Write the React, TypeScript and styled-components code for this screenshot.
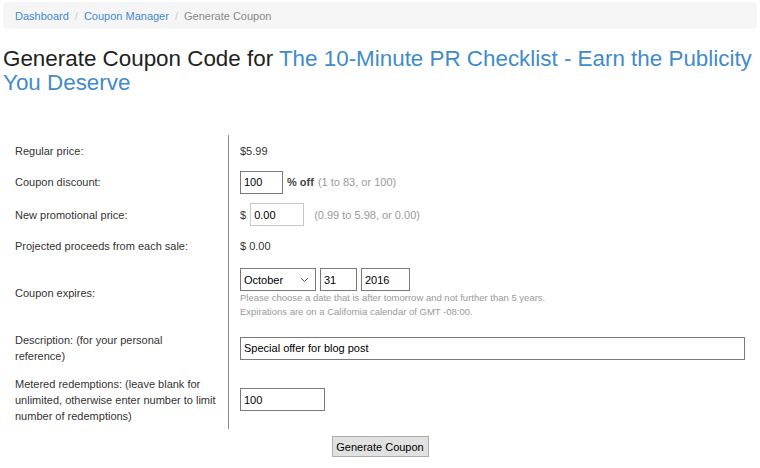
import { createGlobalStyle, styled } from 'styled-components';

const GlobalStyle = createGlobalStyle`
    body {
        margin: 0;
        background: #fff;
        font-family: "Liberation Sans", Arial, sans-serif;
        color: #333;
    }
`;

export default function App() {
    return (
        <Page>
            <GlobalStyle />
            <Breadcrumb>
                <Crumb href="#">Dashboard</Crumb>
                <Separator>/</Separator>
                <Crumb href="#">Coupon Manager</Crumb>
                <Separator>/</Separator>
                <ActiveCrumb>Generate Coupon</ActiveCrumb>
            </Breadcrumb>

            <Title>
                Generate Coupon Code for <TitleLink href="#">The 10-Minute PR Checklist - Earn the Publicity You Deserve</TitleLink>
            </Title>

            <FormTable>
                <Row $h={32}>
                    <Label>Regular price:</Label>
                    <Value>$5.99</Value>
                </Row>
                <Row $h={30}>
                    <Label>Coupon discount:</Label>
                    <Value>
                        <TextInput $w={43} defaultValue="100" />
                        <Unit>% off</Unit>
                        <Hint $gap={0}>(1 to 83, or 100)</Hint>
                    </Value>
                </Row>
                <Row $h={35}>
                    <Label>New promotional price:</Label>
                    <Value>
                        <span>$</span>
                        <TextInput $w={54} $light defaultValue="0.00" />
                        <Hint $gap={6}>(0.99 to 5.98, or 0.00)</Hint>
                    </Value>
                </Row>
                <Row $h={28}>
                    <Label>Projected proceeds from each sale:</Label>
                    <Value>$ 0.00</Value>
                </Row>
                <Row $h={66}>
                    <Label>Coupon expires:</Label>
                    <StackValue>
                        <DateRow>
                            <Select defaultValue="October">
                                <option>October</option>
                            </Select>
                            <TextInput $w={37} defaultValue="31" />
                            <TextInput $w={49} defaultValue="2016" />
                        </DateRow>
                        <Help>Please choose a date that is after tomorrow and not further than 5 years.</Help>
                        <Help>Expirations are on a California calendar of GMT -08:00.</Help>
                    </StackValue>
                </Row>
                <Row $h={44}>
                    <Label>
                        <span>
                            Description: (for your personal
                            <br />
                            reference)
                        </span>
                    </Label>
                    <Value>
                        <TextInput $w={505} defaultValue="Special offer for blog post" />
                    </Value>
                </Row>
                <Row $h={59}>
                    <Label>Metered redemptions: (leave blank for unlimited, otherwise enter number to limit number of redemptions)</Label>
                    <Value>
                        <TextInput $w={85} defaultValue="100" />
                    </Value>
                </Row>
            </FormTable>

            <Actions>
                <Button>Generate Coupon</Button>
            </Actions>
        </Page>
    );
}

const Page = styled.div`
    padding: 2px 3px;
    font-size: 11px;
`;

const Breadcrumb = styled.div`
    display: flex;
    align-items: center;
    height: 27px;
    padding: 0 12px;
    border-radius: 4px;
    background: #f5f5f5;
    font-size: 11px;
`;

const Crumb = styled.a`
    color: #428bca;
    text-decoration: none;
`;

const Separator = styled.span`
    padding: 0 6px;
    color: #ccc;
`;

const ActiveCrumb = styled.span`
    color: #888;
`;

const Title = styled.h1`
    margin: 18px 0 0;
    font-size: 22.4px;
    font-weight: 400;
    line-height: 24px;
    color: #222;
`;

const TitleLink = styled.a`
    color: #428bca;
    text-decoration: none;
`;

const FormTable = styled.div`
    margin-top: 40px;
    display: flex;
    flex-direction: column;
`;

const Row = styled.div<{ $h: number }>`
    display: grid;
    grid-template-columns: 225px 1fr;
    min-height: ${(p) => p.$h}px;
`;

const Label = styled.div`
    display: flex;
    align-items: center;
    padding: 0 7px 0 12px;
    line-height: 16px;
    color: #333;
`;

const Value = styled.div`
    display: flex;
    align-items: center;
    gap: 4px;
    padding-left: 11px;
    border-left: 1px solid #888;
    color: #333;
`;

const StackValue = styled.div`
    display: flex;
    flex-direction: column;
    justify-content: center;
    padding-left: 11px;
    border-left: 1px solid #888;
`;

const DateRow = styled.div`
    display: flex;
    gap: 4px;
    padding-top: 1px;
`;

const TextInput = styled.input<{ $w: number; $light?: boolean }>`
    box-sizing: border-box;
    width: ${(p) => p.$w}px;
    height: 23px;
    margin: 0;
    padding: 0 3px;
    border: 1px solid ${(p) => (p.$light ? '#c8c8c8' : '#7a7a7a')};
    border-radius: 0;
    font-family: "Liberation Sans", Arial, sans-serif;
    font-size: 11px;
    color: #000;
    background: #fff;
`;

const Select = styled.select`
    box-sizing: border-box;
    width: 76px;
    height: 23px;
    margin: 0;
    padding: 0 3px;
    border: 1px solid #7a7a7a;
    border-radius: 0;
    appearance: none;
    background: #fff url("data:image/svg+xml;utf8,<svg xmlns='http://www.w3.org/2000/svg' width='9' height='6' viewBox='0 0 9 6'><path d='M1 1l3.5 3.5L8 1' fill='none' stroke='%23555' stroke-width='1'/></svg>") no-repeat right 6px center;
    font-family: "Liberation Sans", Arial, sans-serif;
    font-size: 11px;
    color: #000;
`;

const Unit = styled.span`
    font-weight: 700;
    color: #444;
`;

const Hint = styled.span<{ $gap: number }>`
    margin-left: ${(p) => p.$gap}px;
    color: #999;
`;

const Help = styled.div`
    font-size: 9.5px;
    line-height: 14px;
    color: #999;
`;

const Actions = styled.div`
    display: flex;
    justify-content: center;
    margin-top: 7px;
`;

const Button = styled.button`
    box-sizing: border-box;
    width: 97px;
    height: 21px;
    padding: 0;
    border: 1px solid #adadad;
    border-radius: 0;
    background: #e1e1e1;
    font-family: "Liberation Sans", Arial, sans-serif;
    font-size: 11px;
    color: #000;
`;
